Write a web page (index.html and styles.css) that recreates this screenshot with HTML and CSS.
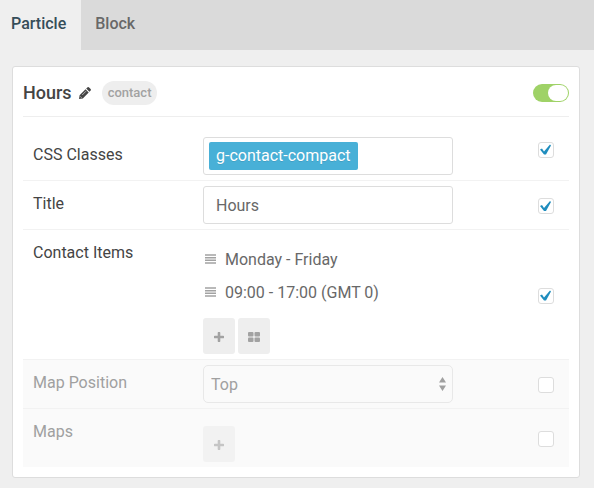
FILE: index.html
```html
<!DOCTYPE html>
<html lang="en">
<head>
<meta charset="utf-8">
<title>Particle settings</title>
<link rel="stylesheet" href="styles.css">
</head>
<body>
<nav class="tabs">
  <a class="tab active" href="#particle">Particle</a>
  <a class="tab" href="#block">Block</a>
</nav>
<main class="card" id="particle">
  <header class="card-header">
    <h1>Hours</h1>
    <button class="edit" type="button" aria-label="Edit title">
      <svg width="12" height="12" viewBox="0 0 12 12"><path fill="currentColor" d="M0 12 .6 8.2 6.5 2.3 9.7 5.5 3.8 11.4ZM7.2 1.6 8.6.3Q9.4-.3 10.1.4L11.6 1.9Q12.3 2.6 11.7 3.4L10.4 4.8Z"/><path d="M3.2 8 7 4.2M1.3 9.4 2.6 10.7" stroke="#fff" stroke-width=".6"/></svg>
    </button>
    <span class="badge">contact</span>
    <input class="toggle" type="checkbox" checked aria-label="Enabled">
  </header>
  <div class="row">
    <label class="name" for="classes">CSS Classes</label>
    <div class="field tags"><span class="tag">g-contact-compact</span><input id="classes" type="text"></div>
    <input class="check" type="checkbox" checked aria-label="Override CSS Classes">
  </div>
  <div class="row">
    <label class="name" for="title">Title</label>
    <input class="field text" id="title" type="text" value="Hours">
    <input class="check" type="checkbox" checked aria-label="Override Title">
  </div>
  <div class="row">
    <span class="name">Contact Items</span>
    <div class="collection">
      <ul>
        <li><svg width="11" height="10" viewBox="0 0 11 10"><path d="M0 1H11M0 3.7H11M0 6.3H11M0 9H11" stroke="currentColor" stroke-width="1.5"/></svg><a href="#item-1">Monday - Friday</a></li>
        <li><svg width="11" height="10" viewBox="0 0 11 10"><path d="M0 1H11M0 3.7H11M0 6.3H11M0 9H11" stroke="currentColor" stroke-width="1.5"/></svg><a href="#item-2">09:00 - 17:00 (GMT 0)</a></li>
      </ul>
      <div class="actions">
        <button type="button" aria-label="Add item"><svg width="10" height="10" viewBox="0 0 10 10"><path d="M5 1V9M1 5H9" stroke="currentColor" stroke-width="2.6" stroke-linecap="round"/></svg></button>
        <button type="button" aria-label="Edit all items"><svg width="12" height="10" viewBox="0 0 12 10" fill="currentColor"><rect width="5.5" height="4.5" rx="1"/><rect x="6.5" width="5.5" height="4.5" rx="1"/><rect y="5.5" width="5.5" height="4.5" rx="1"/><rect x="6.5" y="5.5" width="5.5" height="4.5" rx="1"/></svg></button>
      </div>
    </div>
    <input class="check" type="checkbox" checked aria-label="Override Contact Items">
  </div>
  <div class="row off">
    <label class="name" for="position">Map Position</label>
    <div class="select">
      <select class="field" id="position"><option>Top</option><option>Bottom</option></select>
      <svg width="7" height="14" viewBox="0 0 7 14"><path fill="currentColor" d="M3.5 0 7 5.5H0ZM0 8.5H7L3.5 14Z"/></svg>
    </div>
    <input class="check" type="checkbox" aria-label="Override Map Position">
  </div>
  <div class="row off">
    <span class="name">Maps</span>
    <div class="collection empty">
      <div class="actions">
        <button type="button" aria-label="Add map"><svg width="10" height="10" viewBox="0 0 10 10"><path d="M5 1V9M1 5H9" stroke="currentColor" stroke-width="2.6" stroke-linecap="round"/></svg></button>
      </div>
    </div>
    <input class="check" type="checkbox" aria-label="Override Maps">
  </div>
</main>
</body>
</html>
```
FILE: styles.css
```css
* {
  box-sizing: border-box;
}

body {
  margin: 0;
  background: #efefef;
  color: #444;
  font: 16px/24px Roboto, sans-serif;
}

input,
select,
button {
  margin: 0;
  font: inherit;
  color: inherit;
}

a {
  color: inherit;
  text-decoration: none;
}

svg {
  display: block;
}

.tabs {
  display: flex;
  background: #dadada;
}

.tab {
  padding: 12px 14px 14px;
  color: #686868;
  font-weight: 500;
}

.tab.active {
  padding: 12px 15px 14px 11px;
  background: #efefef;
  color: #354d59;
}

.card {
  margin: 16px 14px 10px 12px;
  padding: 10px;
  background: #fff;
  border: 1px solid #ddd;
  border-radius: 3px;
}

.card-header {
  display: flex;
  align-items: center;
  height: 40px;
  padding-bottom: 8px;
  border-bottom: 1px solid #eee;
}

h1 {
  margin: 0;
  font-size: 18px;
  font-weight: 500;
}

.edit {
  margin: 0 11px 0 7px;
  padding: 0;
  border: 0;
  background: none;
}

.badge {
  padding: 0 6px;
  border-radius: 12px;
  background: #eee;
  color: #a2a2a2;
  font-size: 13px;
  font-weight: 500;
}

.toggle {
  appearance: none;
  display: flex;
  justify-content: flex-end;
  width: 36px;
  height: 18px;
  margin-left: auto;
  padding: 1px;
  border-radius: 9px;
  background: #9fd267;
}

.toggle::before {
  content: "";
  width: 20px;
  border-radius: 8px;
  background: #fff;
}

.row {
  display: grid;
  grid-template-columns: 170px minmax(0, 250px) 1fr;
  align-items: start;
  padding: 5px 15px 5px 10px;
  border-bottom: 1px solid #f2f2f2;
}

.card-header + .row {
  padding-top: 0;
}

.card-header + .row > .name {
  margin-top: 26px;
}

.card-header + .row > .field {
  margin-top: 20px;
}

.card-header + .row > .check {
  margin-top: 7px;
}

.row:last-child {
  border-bottom: 0;
}

.name {
  margin-top: 6px;
}

.field {
  width: 100%;
  height: 38px;
  border: 1px solid #ddd;
  border-radius: 3px;
  background: #fff;
}

.text {
  padding: 0 12px;
  color: #686868;
}

.tags {
  display: flex;
  padding: 4px 5px;
}

.tag {
  padding: 2px 7px;
  border-radius: 2px;
  background: #48b0d7;
  color: #fff;
  text-shadow: 0 1px rgba(0, 0, 0, 0.1);
}

.tags input {
  flex: 1;
  min-width: 0;
  border: 0;
  outline: 0;
}

.check {
  appearance: none;
  align-self: center;
  justify-self: end;
  width: 16px;
  height: 16px;
  margin-top: 2px;
  border: 1px solid #ddd;
  border-radius: 3px;
  background: #fff;
}

.check:checked::before {
  content: "";
  display: block;
  height: 14px;
  background: #1f8dbe;
  clip-path: polygon(1px 7px, 3px 6px, 5px 9px, 11px 2px, 12px 3px, 7px 12px, 5px 12px);
}

.collection ul {
  margin: 8px 0 9px;
  padding: 0;
  list-style: none;
  color: #686868;
}

.collection li {
  display: flex;
  align-items: center;
  gap: 9px;
  height: 33px;
  padding-left: 2px;
}

.collection li svg {
  margin-bottom: 2px;
  color: #a2a2a2;
}

.empty {
  padding-top: 12px;
}

.actions {
  display: flex;
  gap: 3px;
}

.actions button {
  display: grid;
  place-items: center;
  width: 32px;
  height: 36px;
  padding: 2px 1px 0 0;
  border: 0;
  border-radius: 3px;
  background: #eee;
  color: #a2a2a2;
}

.off {
  background: #fafafa;
}

.off .name,
.off .select {
  color: #a0a0a0;
}

.off .actions {
  opacity: 0.6;
}

.select {
  display: grid;
  align-items: center;
}

.select > * {
  grid-area: 1 / 1;
}

.select svg {
  justify-self: end;
  margin-right: 7px;
  pointer-events: none;
}

.select .field {
  appearance: none;
  padding: 1px 7px 0;
  border-color: #e8e8e8;
  border-radius: 5px;
  background: transparent;
}
```
